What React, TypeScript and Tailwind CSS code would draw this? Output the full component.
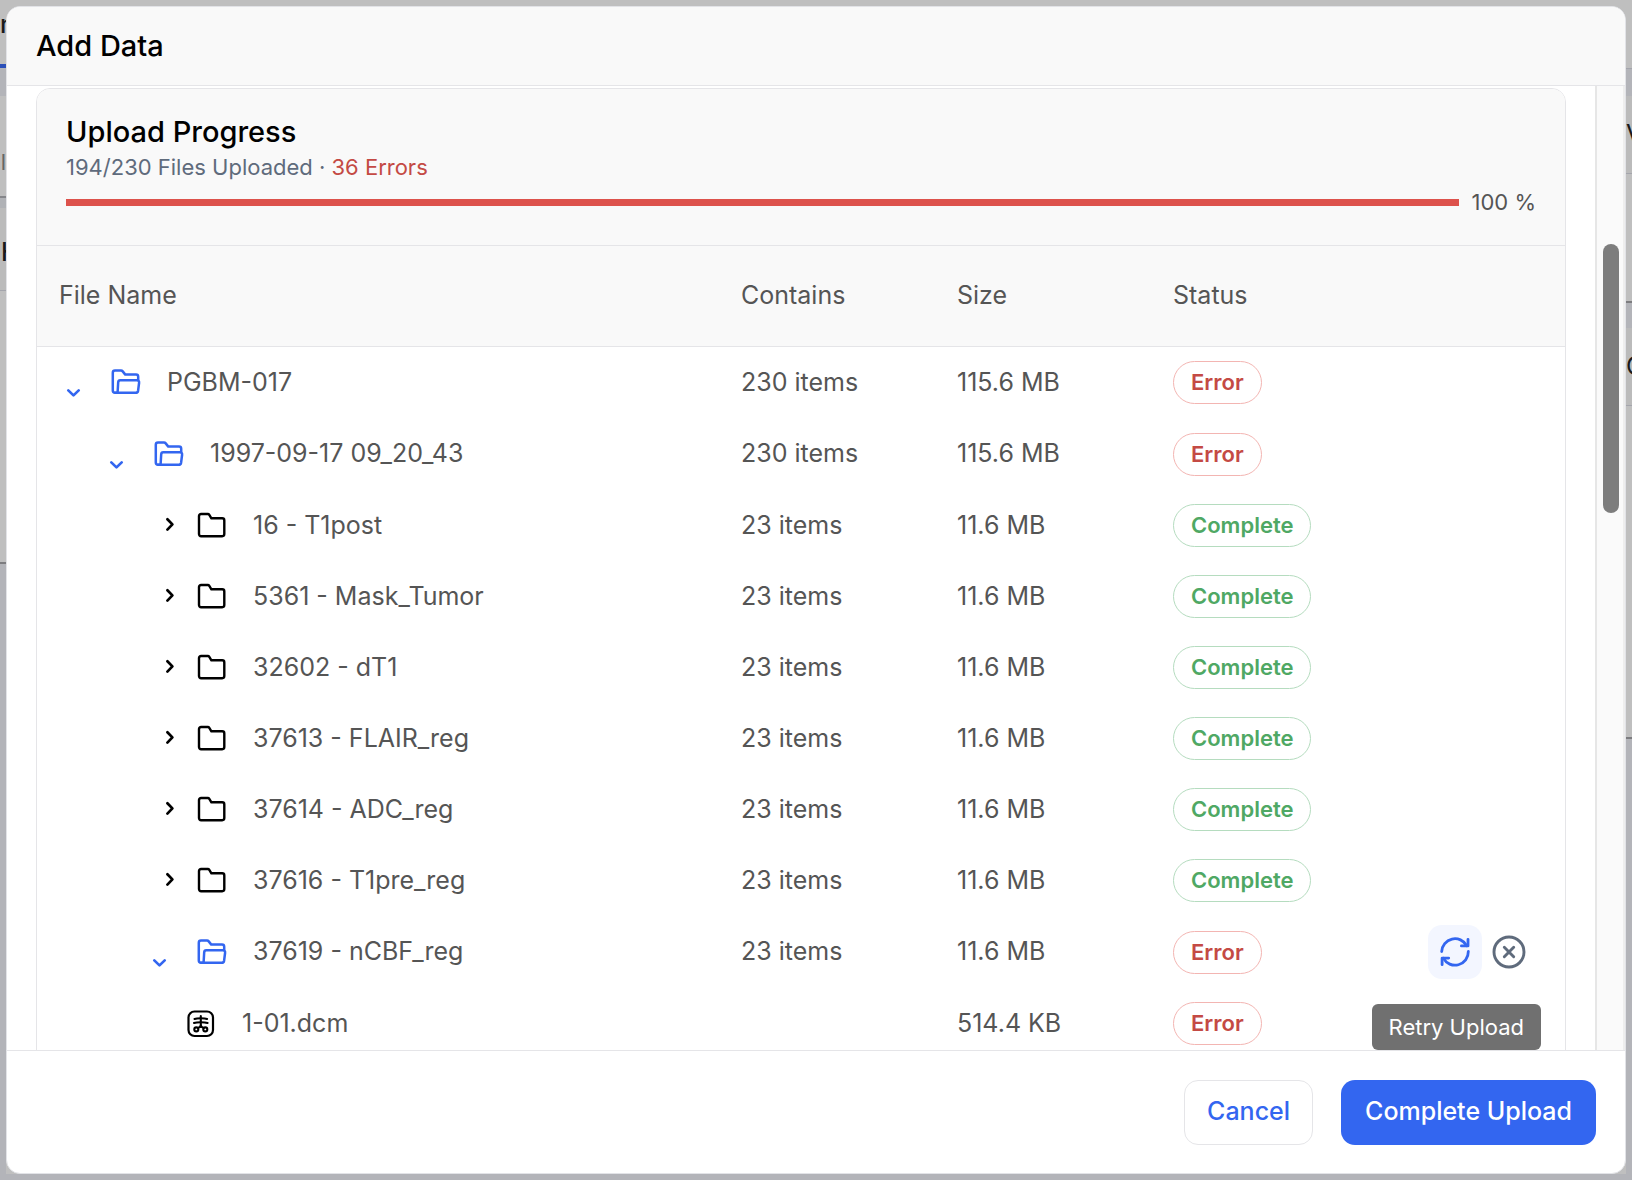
type Status = "Error" | "Complete";
type Kind = "open" | "closed" | "file";

interface Row {
  name: string;
  depth: number;
  kind: Kind;
  contains: string;
  size: string;
  status: Status;
  actions?: boolean;
}

const rows: Row[] = [
  { name: "PGBM-017", depth: 0, kind: "open", contains: "230 items", size: "115.6 MB", status: "Error" },
  { name: "1997-09-17 09_20_43", depth: 1, kind: "open", contains: "230 items", size: "115.6 MB", status: "Error" },
  { name: "16 - T1post", depth: 2, kind: "closed", contains: "23 items", size: "11.6 MB", status: "Complete" },
  { name: "5361 - Mask_Tumor", depth: 2, kind: "closed", contains: "23 items", size: "11.6 MB", status: "Complete" },
  { name: "32602 - dT1", depth: 2, kind: "closed", contains: "23 items", size: "11.6 MB", status: "Complete" },
  { name: "37613 - FLAIR_reg", depth: 2, kind: "closed", contains: "23 items", size: "11.6 MB", status: "Complete" },
  { name: "37614 - ADC_reg", depth: 2, kind: "closed", contains: "23 items", size: "11.6 MB", status: "Complete" },
  { name: "37616 - T1pre_reg", depth: 2, kind: "closed", contains: "23 items", size: "11.6 MB", status: "Complete" },
  { name: "37619 - nCBF_reg", depth: 2, kind: "open", contains: "23 items", size: "11.6 MB", status: "Error", actions: true },
  { name: "1-01.dcm", depth: 3, kind: "file", contains: "", size: "514.4 KB", status: "Error" },
];

const indent = ["pl-[22px]", "pl-[65px]", "pl-[108px]", "pl-[150px]"];

function Chevron({ open }: { open: boolean }) {
  return (
    <svg
      viewBox="0 0 52 32"
      className={open ? "h-8 w-[52px] text-[#3366f0]" : "h-8 w-[52px] text-black"}
      fill="none"
      stroke="currentColor"
      strokeWidth="2.7"
      strokeLinecap="round"
      strokeLinejoin="round"
      aria-hidden="true"
    >
      <path d={open ? "M9.3 24.4l5.200 5 5.200-5" : "M22.400 9.200l5 5.200-5 5.200"} />
    </svg>
  );
}

function FolderIcon({ open }: { open: boolean }) {
  return open ? (
    <svg viewBox="0 0 30 28" className="h-7 w-[30px] text-[#3366f0]" fill="none" stroke="currentColor" strokeWidth="2.5" strokeLinecap="round" strokeLinejoin="round" aria-hidden="true">
      <path d="M4.500 24.800H4a2.200 2.200 0 0 1-2.200-2.200V4.800C1.800 3.500 2.700 2.600 4 2.600h6c.7 0 1.300.3 1.700.8l2.600 3.200h10.700c1.200 0 2.200 1 2.200 2.200v2.900" />
      <path d="M9.200 12.300h16.600c1.500 0 2.500 1 2.300 2.400l-1 8c-.2 1.200-1.100 2.100-2.400 2.100H4.500c1.200 0 2.100-.8 2.200-2l.5-8.500c.1-1.200.9-2 2-2z" />
    </svg>
  ) : (
    <svg viewBox="0 0 30 28" className="h-7 w-[30px] text-black" fill="none" stroke="currentColor" strokeWidth="2.4" strokeLinecap="round" strokeLinejoin="round" aria-hidden="true">
      <path d="M4.100 2h6.700c.6 0 1.200.3 1.500.8l2.100 3.500h10.800c1.200 0 2.100.9 2.100 2.100v13.700c0 1.200-.9 2.100-2.100 2.100H4.100C2.900 24.200 2 23.300 2 22.100v-18C2 2.900 2.900 2 4.100 2z" />
    </svg>
  );
}

function DicomIcon() {
  return (
    <svg viewBox="0 0 28 28" className="h-7 w-7 text-black" fill="none" stroke="currentColor" strokeLinecap="round" strokeLinejoin="round" aria-hidden="true">
      <rect x="1.500" y="1.500" width="24.500" height="24.500" rx="6" strokeWidth="2.200" />
      <g strokeWidth="2.1">
        <path d="M13.800 6v11" />
        <path d="M7.500 8.900c2.500-.9 10.100-.9 12.600 0" />
        <path d="M7 13c3-1 10.600-1 13.600 0" />
        <path d="M13.800 15.500c-.4 1.200-1.400 2-2.900 2.400M13.800 15.500c.4 1.200 1.400 2 2.900 2.400" />
        <circle cx="9.300" cy="19.400" r="2" />
        <circle cx="18.300" cy="19.400" r="2" />
      </g>
    </svg>
  );
}

function Badge({ status }: { status: Status }) {
  return (
    <span
      className={
        status === "Error"
          ? "inline-flex h-[43px] items-center rounded-full border border-[#f3b5b2] px-[17px] text-[22px] font-semibold text-[#c44a44]"
          : "inline-flex h-[43px] items-center rounded-full border border-[#b5dcbf] px-[17px] text-[22px] font-semibold text-[#4fa864]"
      }
    >
      {status}
    </span>
  );
}

function RowActions() {
  return (
    <div className="flex items-center justify-end gap-[10px]">
      <div className="relative">
        <button type="button" aria-label="Retry Upload" className="flex size-[54px] items-center justify-center rounded-[14px] bg-[#f3f6ff] text-[#3366f0]">
          <svg viewBox="0 0 32 32" className="size-8" fill="none" stroke="currentColor" strokeWidth="2.8" strokeLinecap="round" strokeLinejoin="round" aria-hidden="true">
            <path d="M2.700 15.500a13.300 13.300 0 0 1 25-5.800" />
            <path d="M29 3.300v6.600h-6.600" />
            <path d="M29.300 15.500a13.300 13.300 0 0 1-25 6.700" />
            <path d="M3.100 28.700v-6.600h6.600" />
          </svg>
        </button>
        <div role="tooltip" className="absolute top-[79px] -right-[59px] z-10 flex h-[46px] items-center rounded-md bg-[#707070] px-[17px] text-[22px] whitespace-nowrap text-white">
          Retry Upload
        </div>
      </div>
      <button type="button" aria-label="Cancel upload" className="text-[#5f6b7c]">
        <svg viewBox="0 0 34 34" className="size-[34px]" fill="none" stroke="currentColor" strokeWidth="2.9" strokeLinecap="round" aria-hidden="true">
          <circle cx="17" cy="17" r="15" />
          <path d="M12.300 12.300l9.400 9.400M21.700 12.300l-9.400 9.400" />
        </svg>
      </button>
    </div>
  );
}

function NameCell({ row }: { row: Row }) {
  if (row.kind === "file") {
    return (
      <div className={"flex items-center gap-[27px] " + indent[row.depth]}>
        <DicomIcon />
        {row.name}
      </div>
    );
  }
  return (
    <button type="button" aria-expanded={row.kind === "open"} className={"flex items-center " + indent[row.depth]}>
      <Chevron open={row.kind === "open"} />
      <FolderIcon open={row.kind === "open"} />
      <span className="pl-[26px]">{row.name}</span>
    </button>
  );
}

function Backdrop() {
  return (
    <div aria-hidden="true" className="absolute inset-0 flex justify-between bg-[#bfbfbf] text-[25px] text-[#1a1a1a]">
      <div className="flex w-[6px] flex-col overflow-hidden">
        <div className="flex h-16 items-start pt-2 leading-8 font-medium">n</div>
        <div className="h-1 bg-[#2b4fb8]" />
        <div className="h-7 bg-[#b3b4b9]" />
        <div className="flex h-[102px] items-center justify-end border-b-2 border-[#85868a] pt-8 text-[22px] text-[#666]">ul</div>
        <div className="h-[10px] bg-[#b0b2b6]" />
        <div className="flex h-[83px] items-center border-b border-[#a4a5ac] bg-[#bbbbbb] pt-2 pl-[1px] font-medium">H</div>
        <div className="h-[273px] border-b-2 border-[#7d7d80]" />
        <div className="flex-1 bg-[#b3b4b9]" />
      </div>
      <div className="flex w-[6px] flex-col overflow-hidden">
        <div className="h-[69px] border-b border-[#a4a5ac]" />
        <div className="h-[27px] bg-[#b3b4b9]" />
        <div className="flex h-[78px] items-center border-b border-[#a4a5ac] bg-[#bbbbbb]">V</div>
        <div className="h-[129px] border-b-2 border-[#7d7d80]" />
        <div className="h-[25px] bg-[#b3b4b9]" />
        <div className="flex h-[78px] items-center border-b border-[#a4a5ac] bg-[#bbbbbb]">C</div>
        <div className="h-[333px] border-b-2 border-[#7d7d80]" />
        <div className="flex-1 bg-[#b3b4b9]" />
      </div>
    </div>
  );
}

export default function App() {
  return (
    <div className="relative flex h-screen flex-col overflow-hidden p-[6px] font-['Inter',sans-serif] text-[#555]">
      <Backdrop />
      <div className="absolute inset-x-0 bottom-0 h-[6px] bg-[#b3b4b9]" />
      <div role="dialog" aria-labelledby="dialog-title" className="relative flex min-h-0 flex-1 flex-col overflow-hidden rounded-[14px] border border-[#e2e3e7] bg-white">
        <header className="flex h-[79px] shrink-0 items-center border-b border-[#e5e5e8] bg-[#f9f9f9] px-[29px]">
          <h1 id="dialog-title" className="text-[29px] font-medium text-black">Add Data</h1>
        </header>

        <div className="flex min-h-0 flex-1">
          <main className="min-w-0 flex-1 overflow-hidden px-[29px] pt-[2px]">
            <section className="overflow-hidden rounded-t-[14px] border border-[#e5e5e8]">
              <div className="h-[157px] border-b border-[#e5e5e8] bg-[#f9f9f9] px-[29px] pt-6">
                <h2 className="text-[29px] leading-[38px] font-medium text-black">Upload Progress</h2>
                <p className="text-[22px] leading-8 text-[#5f6b7c]">
                  194/230 Files Uploaded · <span className="text-[#c44a44]">36 Errors</span>
                </p>
                <div className="flex items-center gap-[13px]">
                  <div role="progressbar" aria-label="Upload progress" aria-valuenow={100} aria-valuemin={0} aria-valuemax={100} className="h-[7px] flex-1 bg-[#dd524c]" />
                  <span className="text-[22px] leading-[39px]">100 %</span>
                </div>
              </div>

              <table className="w-full table-fixed border-collapse text-left text-[25px]">
                <colgroup>
                  <col />
                  <col className="w-[216px]" />
                  <col className="w-[216px]" />
                  <col className="w-[216px]" />
                  <col className="w-[198px]" />
                </colgroup>
                <thead>
                  <tr className="h-[100px] border-b border-[#e5e5e8] bg-[#f9f9f9]">
                    <th className="px-[22px] font-normal">File Name</th>
                    <th className="px-[22px] font-normal">Contains</th>
                    <th className="px-[22px] font-normal">Size</th>
                    <th className="px-[22px] font-normal">Status</th>
                    <th><span className="sr-only">Actions</span></th>
                  </tr>
                </thead>
                <tbody>
                  {rows.map((row) => (
                    <tr key={row.name} className={row.kind === "open" ? "h-[72px]" : "h-[71px]"}>
                      <td className="p-0 whitespace-nowrap"><NameCell row={row} /></td>
                      <td className="px-[22px] py-0">{row.contains}</td>
                      <td className="px-[22px] py-0">{row.size}</td>
                      <td className="px-[22px] py-0"><Badge status={row.status} /></td>
                      <td className="py-0 pr-[39px] pl-0">{row.actions && <RowActions />}</td>
                    </tr>
                  ))}
                </tbody>
              </table>
            </section>
          </main>
          <div className="flex w-[30px] shrink-0 justify-end border-r-2 border-l-2 border-r-[#eeeeee] border-l-[#e6e6e6] bg-[#fafafa] pt-[158px] pr-1">
            <div className="h-[269px] w-4 rounded-full bg-[#7d7d7d]" />
          </div>
        </div>

        <footer className="flex h-[123px] shrink-0 items-center justify-end gap-7 border-t border-[#e5e5e8] px-[29px]">
          <button type="button" className="h-[65px] rounded-[14px] border border-[#e5e5e8] px-[22px] text-[25px] font-medium text-[#3366f0]">Cancel</button>
          <button type="button" className="h-[65px] rounded-[14px] bg-[#3366f0] px-6 text-[25px] font-medium text-white">Complete Upload</button>
        </footer>
      </div>
    </div>
  );
}
